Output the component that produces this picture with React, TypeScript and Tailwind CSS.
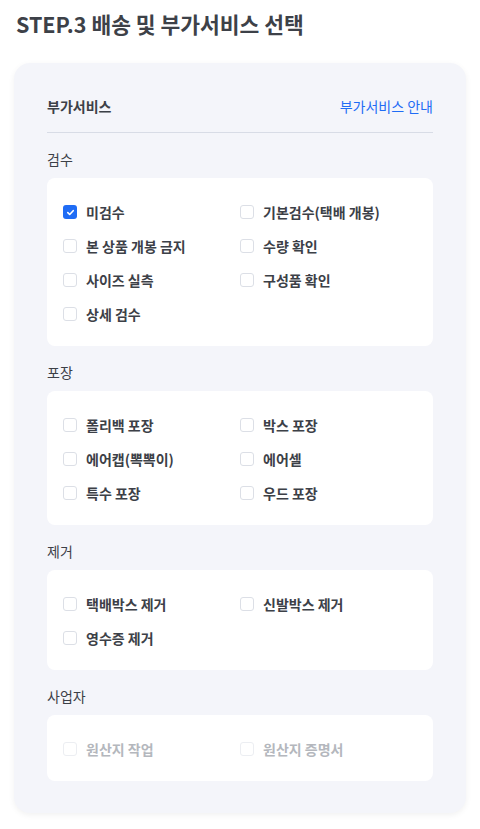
import React from "react";

type Item = { label: string; checked?: boolean; disabled?: boolean };
type Group = { title: string; items: Item[] };

const groups: Group[] = [
  {
    title: "검수",
    items: [
      { label: "미검수", checked: true },
      { label: "기본검수(택배 개봉)" },
      { label: "본 상품 개봉 금지" },
      { label: "수량 확인" },
      { label: "사이즈 실측" },
      { label: "구성품 확인" },
      { label: "상세 검수" },
    ],
  },
  {
    title: "포장",
    items: [
      { label: "폴리백 포장" },
      { label: "박스 포장" },
      { label: "에어캡(뽁뽁이)" },
      { label: "에어셀" },
      { label: "특수 포장" },
      { label: "우드 포장" },
    ],
  },
  {
    title: "제거",
    items: [
      { label: "택배박스 제거" },
      { label: "신발박스 제거" },
      { label: "영수증 제거" },
    ],
  },
  {
    title: "사업자",
    items: [
      { label: "원산지 작업", disabled: true },
      { label: "원산지 증명서", disabled: true },
    ],
  },
];

function Check({ item }: { item: Item }) {
  return (
    <label className="flex h-[34px] items-center gap-[9px]">
      {item.checked ? (
        <span className="flex h-[14px] w-[14px] items-center justify-center rounded-[3px] bg-[#1f6cf5]">
          <svg width="9" height="9" viewBox="0 0 10 10" fill="none">
            <path d="M2 5.2 L4.1 7.2 L8 3" stroke="white" strokeWidth="1.8" strokeLinecap="round" strokeLinejoin="round" />
          </svg>
        </span>
      ) : (
        <span
          className={
            item.disabled
              ? "h-[14px] w-[14px] rounded-[3px] border border-[#eceef2] bg-white"
              : "h-[14px] w-[14px] rounded-[3px] border border-[#dcdfe6] bg-white"
          }
        />
      )}
      <span
        className={
          item.disabled
            ? "text-[14px] font-bold leading-[20px] text-[#b4b7bd]"
            : "text-[14px] font-bold leading-[20px] text-[#3c4047]"
        }
      >
        {item.label}
      </span>
    </label>
  );
}

export default function App() {
  return (
    <div
      className="min-h-[829px] bg-white px-[14px] pt-[10px] pb-4"
      style={{ fontFamily: '"Noto Sans CJK KR", "Noto Sans", sans-serif' }}
    >
      <h1 className="pl-[2px] text-[21.5px] font-bold leading-[28px] text-[#3d4148]">
        STEP.3 배송 및 부가서비스 선택
      </h1>
      <div className="mt-[25px] rounded-[16px] bg-[#f4f5fa] px-[33px] pt-[33px] pb-[32px] shadow-[0_2px_6px_rgba(0,0,0,0.06)]">
        <div className="flex items-center justify-between border-b border-[#d8dce6] pb-[16px]">
          <span className="text-[14px] font-bold leading-[20px] text-[#3c4047]">부가서비스</span>
          <span className="text-[14px] leading-[20px] text-[#1f6cf5]">부가서비스 안내</span>
        </div>
        <div className="flex flex-col gap-[16px] pt-[16px]">
          {groups.map((g) => (
            <div key={g.title}>
              <div className="text-[14px] leading-[20px] text-[#3c4047]">{g.title}</div>
              <div className="mt-[9px] grid grid-cols-2 rounded-[8px] bg-white px-[16px] pt-[17px] pb-[15px]">
                {g.items.map((it) => (
                  <Check key={it.label} item={it} />
                ))}
              </div>
            </div>
          ))}
        </div>
      </div>
    </div>
  );
}
